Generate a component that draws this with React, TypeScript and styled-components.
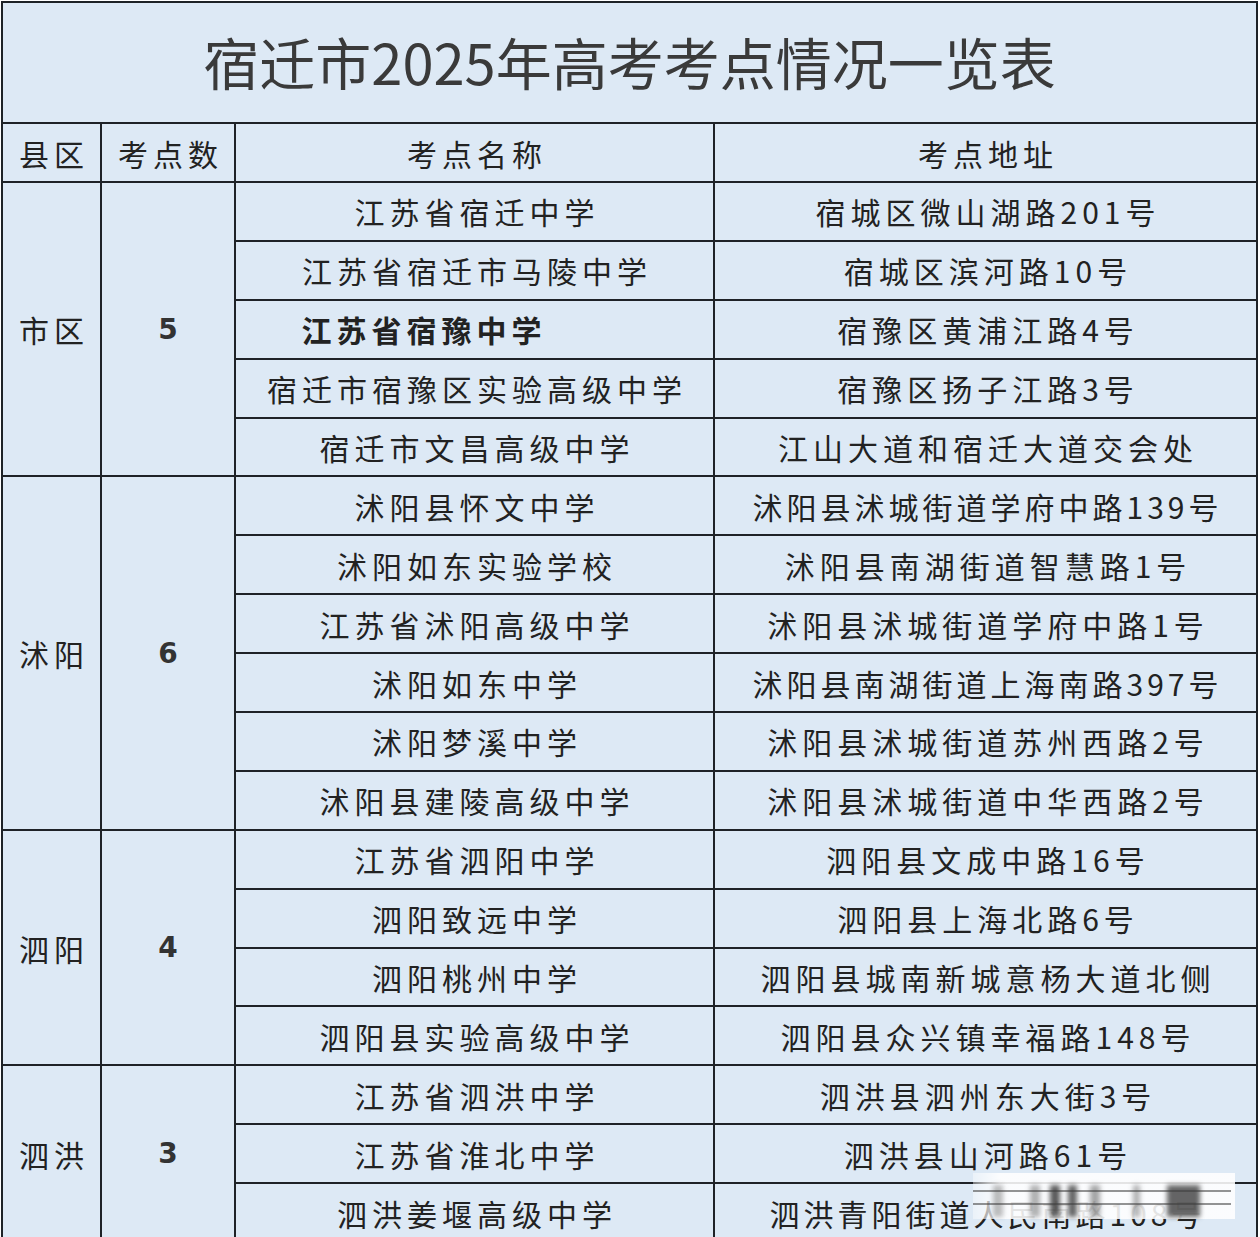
import React from 'react'
import styled, { createGlobalStyle } from 'styled-components'

const GlobalStyle = createGlobalStyle`
html, body {
    margin:0;
    padding:0;
    background:#ffffff;
}
body {
    font-family:"Noto Sans CJK SC", "Noto Sans", sans-serif;
}
`

const Page = styled.div`
position:relative;
width:1260px;
height:1237px;
overflow:hidden;
padding:1px 0 0 1px;
box-sizing:border-box;
`

const Table = styled.table`
width:1255px;
border-collapse:collapse;
table-layout:fixed;
background-color:#dde9f5;
color:#222222;
`

const TitleCell = styled.th`
height:115px;
border:2px solid #1e2227;
font-size:56px;
font-weight:400;
color:#3a3a3a;
text-align:center;
vertical-align:middle;
padding:0 0 4px 0;
`

const HeadCell = styled.th`
height:57px;
border:2px solid #1e2227;
font-size:30px;
font-weight:400;
letter-spacing:5px;
text-indent:5px;
text-align:center;
vertical-align:middle;
padding:0;
`

const Cell = styled.td<{ $bold?: boolean; $shift?: number; $tight?: boolean; $num?: boolean }>`
height:56.9px;
border:2px solid #1e2227;
font-size:30px;
font-weight:${p => (p.$bold ? 700 : 400)};
letter-spacing:${p => (p.$tight ? '4px' : '5px')};
text-indent:${p => (p.$tight ? '4px' : '5px')};
text-align:center;
vertical-align:middle;
white-space:nowrap;
padding:0 ${p => p.$shift ?? 0}px 0 0;
font-family:${p => (p.$num ? '"DejaVu Sans", "Noto Sans CJK SC", sans-serif' : 'inherit')};
${p => (p.$num ? 'font-size:28px; font-weight:700; color:#333;' : '')}
`

const Watermark = styled.div`
position:absolute;
left:973px;
top:1173px;
width:262px;
height:46px;
background:linear-gradient(90deg, rgba(255,255,255,0.4) 0%, rgba(255,255,255,0.88) 10%, rgba(255,255,255,0.88) 100%);
display:flex;
align-items:flex-end;
padding-bottom:2px;
box-sizing:border-box;
`

const WaterBar = styled.span<{ $ml: number; $w: number; $tone: number }>`
display:block;
margin-left:${p => p.$ml}px;
width:${p => p.$w}px;
height:32px;
background:rgba(35,35,35,${p => p.$tone});
filter:blur(2.5px);
`

const WaterLine = styled.span<{ $top: number }>`
position:absolute;
left:0;
right:4px;
top:${p => p.$top}px;
height:2px;
background:rgba(60,60,60,0.55);
`

type School = { name: string; addr: string; bold?: boolean; shift?: number }
type District = { county: string; count: number; schools: School[] }

const districts: District[] = [
    {
        county: '市区', count: 5, schools: [
            { name: '江苏省宿迁中学', addr: '宿城区微山湖路201号' },
            { name: '江苏省宿迁市马陵中学', addr: '宿城区滨河路10号' },
            { name: '江苏省宿豫中学', addr: '宿豫区黄浦江路4号', bold: true, shift: 106 },
            { name: '宿迁市宿豫区实验高级中学', addr: '宿豫区扬子江路3号' },
            { name: '宿迁市文昌高级中学', addr: '江山大道和宿迁大道交会处' },
        ]
    },
    {
        county: '沭阳', count: 6, schools: [
            { name: '沭阳县怀文中学', addr: '沭阳县沭城街道学府中路139号' },
            { name: '沭阳如东实验学校', addr: '沭阳县南湖街道智慧路1号' },
            { name: '江苏省沭阳高级中学', addr: '沭阳县沭城街道学府中路1号' },
            { name: '沭阳如东中学', addr: '沭阳县南湖街道上海南路397号' },
            { name: '沭阳梦溪中学', addr: '沭阳县沭城街道苏州西路2号' },
            { name: '沭阳县建陵高级中学', addr: '沭阳县沭城街道中华西路2号' },
        ]
    },
    {
        county: '泗阳', count: 4, schools: [
            { name: '江苏省泗阳中学', addr: '泗阳县文成中路16号' },
            { name: '泗阳致远中学', addr: '泗阳县上海北路6号' },
            { name: '泗阳桃州中学', addr: '泗阳县城南新城意杨大道北侧' },
            { name: '泗阳县实验高级中学', addr: '泗阳县众兴镇幸福路148号' },
        ]
    },
    {
        county: '泗洪', count: 3, schools: [
            { name: '江苏省泗洪中学', addr: '泗洪县泗州东大街3号' },
            { name: '江苏省淮北中学', addr: '泗洪县山河路61号' },
            { name: '泗洪姜堰高级中学', addr: '泗洪青阳街道人民南路108号' },
        ]
    },
]

// blurred strokes of the photo watermark: gap before, width, darkness
const waterBars = [
    [20, 10, 0.3], [27, 10, 0.35], [10, 10, 0.75], [8, 9, 0.7],
    [13, 10, 0.4], [33, 7, 0.35], [27, 33, 0.7],
]

const App = () => {
    return (
        <>
            <GlobalStyle />
            <Page>
                <Table>
                    <colgroup>
                        <col style={{ width: 99 }} />
                        <col style={{ width: 134 }} />
                        <col style={{ width: 479 }} />
                        <col style={{ width: 543 }} />
                    </colgroup>
                    <thead>
                        <tr>
                            <TitleCell colSpan={4}>宿迁市2025年高考考点情况一览表</TitleCell>
                        </tr>
                        <tr>
                            <HeadCell>县区</HeadCell>
                            <HeadCell>考点数</HeadCell>
                            <HeadCell>考点名称</HeadCell>
                            <HeadCell>考点地址</HeadCell>
                        </tr>
                    </thead>
                    <tbody>
                        {districts.map(d => d.schools.map((s, i) => (
                            <tr key={d.county + i}>
                                {i === 0 && <Cell rowSpan={d.schools.length}>{d.county}</Cell>}
                                {i === 0 && <Cell rowSpan={d.schools.length} $num>{d.count}</Cell>}
                                <Cell $bold={s.bold} $shift={s.shift}>{s.name}</Cell>
                                <Cell $tight={s.addr.length > 13}>{s.addr}</Cell>
                            </tr>
                        )))}
                    </tbody>
                </Table>
                <Watermark>
                    {waterBars.map(([ml, w, tone], i) => (
                        <WaterBar key={i} $ml={ml} $w={w} $tone={tone} />
                    ))}
                    <WaterLine $top={17} />
                    <WaterLine $top={30} />
                </Watermark>
            </Page>
        </>
    )
}

export default App
